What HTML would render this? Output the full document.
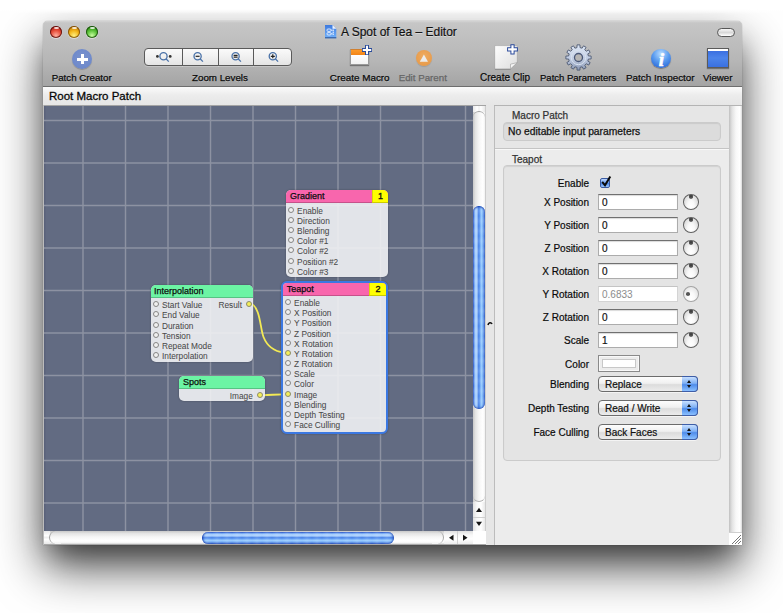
<!DOCTYPE html>
<html><head><meta charset="utf-8">
<style>
*{box-sizing:border-box;margin:0;padding:0}
html,body{width:783px;height:613px;overflow:hidden;background:#fff;font-family:"Liberation Sans",sans-serif}
.a{position:absolute}
#win{position:absolute;left:43px;top:21px;width:699px;height:524px;border-radius:5px 5px 0 0;box-shadow:0 23px 48px rgba(0,0,0,0.66),0 16px 26px -8px rgba(0,0,0,0.4),0 0 1px rgba(0,0,0,0.5);background:#ececec}
#tb{position:absolute;left:43px;top:21px;width:699px;height:66px;border-radius:5px 5px 0 0;background:linear-gradient(#d4d4d4 0px,#c6c6c6 2px,#b6b6b6 40px,#a4a4a4 65px);border-bottom:1px solid #6e6e6e}
.lbl{position:absolute;font-size:10px;line-height:10px;color:#0a0a0a;-webkit-text-stroke:0.25px currentColor;white-space:nowrap;text-shadow:0 1px 0 rgba(255,255,255,0.3)}
.tl{position:absolute;top:25.6px;width:12.2px;height:12.2px;border-radius:50%}
#path{position:absolute;left:43px;top:87px;width:699px;height:18px;background:linear-gradient(#fbfbfb,#ececec 45%,#e6e6e6)}
.seg{position:absolute;top:47.5px;height:18.5px;background:linear-gradient(#fafafa,#f0f0f0 50%,#e4e4e4);border:1px solid #5a5a5a;box-shadow:0 1px 0 rgba(255,255,255,.25)}

.pl{position:absolute;font-size:10px;line-height:12px;color:#0a0a0a;-webkit-text-stroke:0.2px currentColor;white-space:nowrap;text-align:right;width:120px;left:469px}
.fld{position:absolute;left:598px;width:80px;height:16px;background:#fff;border:1px solid #acacac;border-top-color:#707070;box-shadow:inset 0 1px 1px rgba(0,0,0,.15)}
.fld span{position:absolute;left:3px;top:2px;-webkit-text-stroke:0.2px currentColor;font-size:10px;line-height:12px;color:#111}
.knob{position:absolute;left:683px;width:16px;height:15.5px;border-radius:50%;border:1.2px solid #606060;background:radial-gradient(ellipse at 50% 80%,#fff 0,#f8f8f8 35%,#dcdcdc 75%,#c0c0c0 100%)}
.knob:after{content:"";position:absolute;left:4.8px;top:0px;width:4.5px;height:4px;border-radius:0 0 50% 50%;background:radial-gradient(circle at 50% 30%,#333,#666 70%,rgba(100,100,100,.4))}
.pop{position:absolute;left:598px;width:100px;height:16px;border-radius:4px;border:1px solid #6c6c6c;background:linear-gradient(#fdfdfd,#f0f0f0 45%,#dcdcdc 55%,#ececec);box-shadow:0 1px 0 rgba(255,255,255,.6)}
.pop span{position:absolute;left:6px;top:1.5px;-webkit-text-stroke:0.2px currentColor;font-size:10px;line-height:12px;color:#111}
.pop i{position:absolute;right:-1px;top:-1px;width:16px;height:16px;border-radius:0 4px 4px 0;border:1px solid #3e5ea8;border-left:none;background:linear-gradient(#c8e0ff,#7fb0f4 45%,#4f8cea 55%,#8ac0ff)}
.pop i:before{content:"";position:absolute;left:4.5px;top:2.5px;border-left:2.5px solid transparent;border-right:2.5px solid transparent;border-bottom:3.5px solid #111}
.pop i:after{content:"";position:absolute;left:4.5px;top:8px;border-left:2.5px solid transparent;border-right:2.5px solid transparent;border-top:3.5px solid #111}

.pt{position:absolute;border-radius:5px;background:rgba(241,242,244,.9);box-shadow:0 0 2px rgba(0,0,0,.35);overflow:hidden}
.ph{position:absolute;left:0;top:0;right:0;font-size:9px;line-height:12.8px;color:#0e0e0e;-webkit-text-stroke:0.25px currentColor;padding-left:4px;white-space:nowrap;border-bottom:1px solid rgba(0,0,0,.2)}
.pn{position:absolute;top:0;right:0;height:13.3px;-webkit-text-stroke:0.35px currentColor;background:#ffff00;font-size:9px;line-height:12.8px;border-bottom:1px solid rgba(0,0,0,.2);text-align:center;color:#111;border-left:1px solid rgba(0,0,0,.15)}
.pr{position:absolute;font-size:8.3px;line-height:10px;color:#4a4a4a;white-space:nowrap;-webkit-text-stroke:0.05px currentColor}
.po{position:absolute;width:6px;height:6px;border-radius:50%;border:1px solid #858585;background:#f0f0f0}
.py{background:#f4ee5a;border-color:#8c8c6a}
</style></head><body>
<div id="win"></div>
<div class="a" style="left:0;top:0;width:783px;height:14px;background:linear-gradient(#fff 0,#fff 9px,rgba(255,255,255,0) 14px)"></div>
<div id="tb"></div>
<div class="a" style="left:43px;top:87px;width:1px;height:458px;background:#bcbcbc"></div>
<!-- traffic lights -->
<div class="tl" style="left:50px;background:radial-gradient(circle at 50% 80%,#ffb0a0 0,#e8503c 45%,#b01e14 80%,#5a0e0a 100%);box-shadow:inset 0 0 0 1px rgba(70,10,8,.75),0 1px 1px rgba(255,255,255,.5)"></div>
<div class="tl" style="left:68px;background:radial-gradient(circle at 50% 80%,#fff080 0,#f2b418 45%,#c07808 80%,#6a4004 100%);box-shadow:inset 0 0 0 1px rgba(100,60,4,.7),0 1px 1px rgba(255,255,255,.5)"></div>
<div class="tl" style="left:86px;background:radial-gradient(circle at 50% 80%,#c8ffa0 0,#5cc23a 45%,#2a8a10 80%,#134806 100%);box-shadow:inset 0 0 0 1px rgba(16,60,6,.75),0 1px 1px rgba(255,255,255,.5)"></div>
<div class="a" style="left:53.6px;top:26.8px;width:5px;height:2.6px;border-radius:50%;background:rgba(255,255,255,.8)"></div>
<div class="a" style="left:71.6px;top:26.8px;width:5px;height:2.6px;border-radius:50%;background:rgba(255,255,255,.8)"></div>
<div class="a" style="left:89.6px;top:26.8px;width:5px;height:2.6px;border-radius:50%;background:rgba(255,255,255,.8)"></div>
<!-- title -->
<svg class="a" style="left:325px;top:24.8px" width="12" height="14" viewBox="0 0 12 14"><defs><linearGradient id="dg" x1="0" y1="0" x2="0" y2="1"><stop offset="0" stop-color="#3e7ade"/><stop offset="1" stop-color="#72b2fa"/></linearGradient></defs><path d="M0 0h7.5l3.8 3.8V13.2H0z" fill="url(#dg)"/><path d="M0 12.3h11.3v1H0z" fill="#2a4e90"/><path d="M7.5 0l3.8 3.8H7.5z" fill="#eef4ff"/><g fill="none" stroke="#e4eeff" stroke-width="0.9"><rect x="2" y="4" width="4" height="2.4" rx="1"/><rect x="2" y="7.6" width="4" height="2.4" rx="1"/><path d="M6 5.2h1.6M6 8.8h1.6"/></g><g fill="#e4eeff"><rect x="7.6" y="4.6" width="1.4" height="1.2"/><rect x="7.6" y="6.6" width="1.4" height="1.2"/><rect x="7.6" y="8.6" width="1.4" height="1.2"/></g></svg>
<div class="a" style="left:341px;top:25.8px;font-size:12px;line-height:13px;color:#111;-webkit-text-stroke:0.2px #111;white-space:nowrap;text-shadow:0 1px 0 rgba(255,255,255,.4)">A Spot of Tea – Editor</div>
<!-- toolbar pill -->
<div class="a" style="left:717px;top:28px;width:18px;height:9px;border-radius:5px;border:1px solid #575757;background:linear-gradient(#f8f8f8,#d8d8d8 50%,#fff)"></div>

<!-- Patch creator -->
<div class="a" style="left:72px;top:49px;width:20px;height:20px;border-radius:50%;background:radial-gradient(circle at 50% 45%,#7a92cc 0,#6f8acb 65%,#5b7ac6 85%,#6a88d0 100%);box-shadow:0 1px 1px rgba(0,0,0,.2)"></div>
<div class="a" style="left:76.8px;top:58px;width:10.8px;height:2.9px;background:#fff"></div>
<div class="a" style="left:80.8px;top:53.9px;width:2.9px;height:10.6px;background:#fff"></div>
<div class="lbl" style="left:51.7px;top:73.3px;font-size:9.72px">Patch Creator</div>

<!-- Zoom segmented -->
<div class="seg" style="left:144px;width:39px;border-radius:4px 0 0 4px"></div>
<div class="seg" style="left:182px;width:37px"></div>
<div class="seg" style="left:218px;width:36px"></div>
<div class="seg" style="left:253px;width:39px;border-radius:0 4px 4px 0"></div>
<svg class="a" style="left:144px;top:47px" width="148" height="19" viewBox="0 0 148 19">
 <g fill="none" stroke="#4a72a8" stroke-width="1.3">
  <circle cx="19.5" cy="9.3" r="3.6"/><path d="M22 11.8l2.8 2.8"/>
  <circle cx="53.6" cy="9.3" r="3.6"/><path d="M56.1 11.8l2.8 2.8"/>
  <circle cx="91.6" cy="9.3" r="3.6"/><path d="M94.1 11.8l2.8 2.8"/>
  <circle cx="128.8" cy="9.3" r="3.6"/><path d="M131.3 11.8l2.8 2.8"/>
 </g>
 <g fill="#333"><circle cx="13.4" cy="9.4" r="1.4"/><circle cx="26.2" cy="9.4" r="1.4"/></g>
 <g stroke="#222" stroke-width="1.2"><path d="M51.6 9.3h4"/><path d="M89.6 8.4h4M89.6 10.2h4"/><path d="M126.8 9.3h4M128.8 7.3v4"/></g>
</svg>
<div class="lbl" style="left:192px;top:73.3px;font-size:9.77px">Zoom Levels</div>

<!-- Create Macro -->
<div class="a" style="left:349.5px;top:48.5px;width:19.8px;height:16.5px;background:linear-gradient(#fc9a2a 0,#f28418 5.2px,#fff 5.2px,#f2f2f2);border:1px solid #9a9a9a;border-top-color:#d08030;box-shadow:0 1px 1px rgba(0,0,0,.35)"></div>
<svg class="a" style="left:361.3px;top:44.3px" width="12" height="12" viewBox="0 0 12 12"><path d="M6 1v10M1 6h10" stroke="#2c4c9a" stroke-width="4"/><path d="M6 1.8v8.4M1.8 6h8.4" stroke="#fff" stroke-width="2"/></svg>
<div class="lbl" style="left:329.8px;top:73.3px;font-size:9.9px">Create Macro</div>

<!-- Edit parent -->
<div class="a" style="left:415.9px;top:50.2px;width:16px;height:16px;border-radius:50%;background:radial-gradient(circle at 50% 40%,#eeac62,#e89c4c 70%,#dc9040);box-shadow:0 1px 1px rgba(0,0,0,.12)"></div>
<svg class="a" style="left:418px;top:52.5px" width="12" height="10" viewBox="0 0 12 10"><path d="M5.9 1.4L10 8.8H1.8z" fill="#ececec"/></svg>
<div class="lbl" style="left:398.7px;top:73.3px;font-size:9.75px;color:#666;text-shadow:none">Edit Parent</div>

<!-- Create Clip -->
<svg class="a" style="left:492px;top:43px" width="30" height="28" viewBox="0 0 30 28">
 <defs><linearGradient id="pg" x1="0" y1="0" x2="1" y2="1"><stop offset="0" stop-color="#fdfdfd"/><stop offset="1" stop-color="#dedede"/></linearGradient></defs>
 <path d="M2.9 2.7H25.2V19.6L18.5 25.9H2.9z" fill="url(#pg)" stroke="rgba(0,0,0,.18)" stroke-width="0.6"/>
 <path d="M2.9 26.2H18.5" stroke="rgba(0,0,0,.25)" stroke-width="0.8"/>
 <path d="M18.5 21.2L25.2 19.6L18.5 25.9z" fill="#f4f4f4" stroke="#9a9a9a" stroke-width="0.6"/>
 <path d="M20.5 1.2V11.4M15.1 6.3H25.9" stroke="#2a4a9c" stroke-width="4.2"/><path d="M20.5 2.2V10.4M16.1 6.3H24.9" stroke="#fff" stroke-width="2.2"/>
</svg>
<div class="lbl" style="left:480px;top:73.3px">Create Clip</div>

<!-- Gear -->
<svg class="a" style="left:564.7px;top:43.6px" width="27" height="27" viewBox="0 0 27 27">
 <defs><linearGradient id="gg" x1="0" y1="0" x2="0" y2="1"><stop offset="0" stop-color="#dfe8f6"/><stop offset="0.55" stop-color="#c0cce2"/><stop offset="1" stop-color="#8a98b4"/></linearGradient></defs>
 <path fill="url(#gg)" stroke="#4e5a74" stroke-width="0.9" stroke-linejoin="round" d="M11.99 3.62 L12.04 0.88 L14.96 0.88 L15.01 3.62 L17.13 4.18 L18.54 1.84 L21.07 3.30 L19.75 5.70 L21.30 7.25 L23.70 5.93 L25.16 8.46 L22.82 9.87 L23.38 11.99 L26.12 12.04 L26.12 14.96 L23.38 15.01 L22.82 17.13 L25.16 18.54 L23.70 21.07 L21.30 19.75 L19.75 21.30 L21.07 23.70 L18.54 25.16 L17.13 22.82 L15.01 23.38 L14.96 26.12 L12.04 26.12 L11.99 23.38 L9.87 22.82 L8.46 25.16 L5.93 23.70 L7.25 21.30 L5.70 19.75 L3.30 21.07 L1.84 18.54 L4.18 17.13 L3.62 15.01 L0.88 14.96 L0.88 12.04 L3.62 11.99 L4.18 9.87 L1.84 8.46 L3.30 5.93 L5.70 7.25 L7.25 5.70 L5.93 3.30 L8.46 1.84 L9.87 4.18Z"/>
 <circle cx="13.5" cy="13.5" r="7.2" fill="none" stroke="#d8e2f0" stroke-width="1"/>
 <circle cx="13.5" cy="13.5" r="4" fill="#b6b6b6" stroke="#4a5878" stroke-width="1.3"/>
</svg>
<div class="lbl" style="left:540px;top:73.3px;font-size:9.53px">Patch Parameters</div>

<!-- Info -->
<div class="a" style="left:651.2px;top:48.6px;width:19.5px;height:19.5px;border-radius:50%;background:radial-gradient(circle at 50% 25%,#b8dcff 0,#5a9cf0 45%,#2c6ad8 85%,#2458c0 100%);box-shadow:0 1px 1px rgba(0,0,0,.3)"></div>
<div class="a" style="left:651.5px;top:48.6px;width:20px;height:20px;font-family:'Liberation Serif',serif;font-style:italic;font-weight:bold;font-size:19px;line-height:21px;text-align:center;color:#fff;-webkit-text-stroke:0.6px #fff">i</div>
<div class="lbl" style="left:626px;top:73.3px;font-size:9.9px">Patch Inspector</div>

<!-- Viewer -->
<div class="a" style="left:707.3px;top:48px;width:21.8px;height:19.6px;border:1px solid #5a5a5a;background:linear-gradient(#fff 0,#fff 1.5px,#3a6ee0 1.5px,#4c84ea 50%,#3a70e0);box-shadow:0 1px 1px rgba(0,0,0,.35)"></div>
<div class="lbl" style="left:703px;top:73.3px;font-size:9.7px">Viewer</div>

<div id="path"><div class="a" style="left:6px;top:2.3px;font-size:11.5px;line-height:14px;color:#080808;-webkit-text-stroke:0.3px #080808">Root Macro Patch</div></div>

<svg class="a" style="left:44px;top:106px" width="429" height="425"><rect width="429" height="425" fill="#626b82"/><rect x="0" y="0" width="1.5" height="425" fill="#5a627a"/><g stroke="#8d92a2" stroke-width="1.45"><path d="M39.0 0V425"/><path d="M81.5 0V425"/><path d="M124.0 0V425"/><path d="M166.5 0V425"/><path d="M209.0 0V425"/><path d="M251.5 0V425"/><path d="M294.0 0V425"/><path d="M336.5 0V425"/><path d="M379.0 0V425"/><path d="M421.5 0V425"/><path d="M0 14.5H429"/><path d="M0 57.0H429"/><path d="M0 99.5H429"/><path d="M0 142.0H429"/><path d="M0 184.5H429"/><path d="M0 227.0H429"/><path d="M0 269.5H429"/><path d="M0 312.0H429"/><path d="M0 354.5H429"/><path d="M0 397.0H429"/></g></svg>
<svg class="a" style="left:0;top:0" width="783" height="613"><g fill="none" stroke="#f3ea55" stroke-width="1.8"><path d="M251 303.5C260.5 308 260 328 263.5 337C267.5 347 275 351.5 284 352.5"/><path d="M262 395.3C272 395 276 394.3 284 394.3"/></g></svg>
<div class="pt" style="left:286px;top:190px;width:102px;height:87px">
<div class="ph" style="background:#f866ad;height:13.3px">Gradient</div><div class="pn" style="width:16px">1</div>
<div class="po" style="left:2.20px;top:16.50px"></div><div class="pr" style="left:11.10px;top:15.65px">Enable</div>
<div class="po" style="left:2.20px;top:26.70px"></div><div class="pr" style="left:11.10px;top:25.85px">Direction</div>
<div class="po" style="left:2.20px;top:36.90px"></div><div class="pr" style="left:11.10px;top:36.05px">Blending</div>
<div class="po" style="left:2.20px;top:47.10px"></div><div class="pr" style="left:11.10px;top:46.25px">Color #1</div>
<div class="po" style="left:2.20px;top:57.30px"></div><div class="pr" style="left:11.10px;top:56.45px">Color #2</div>
<div class="po" style="left:2.20px;top:67.50px"></div><div class="pr" style="left:11.10px;top:66.65px">Position #2</div>
<div class="po" style="left:2.20px;top:77.70px"></div><div class="pr" style="left:11.10px;top:76.85px">Color #3</div>
</div>
<div class="pt" style="left:281px;top:281px;width:107px;height:152.8px;border:2.5px solid #3b78e2;border-radius:6px">
<div class="ph" style="background:#f866ad;height:13.3px;padding-left:3.7px">Teapot</div><div class="pn" style="width:17px">2</div>
<div class="po" style="left:2.20px;top:15.90px"></div><div class="pr" style="left:11.10px;top:15.05px">Enable</div>
<div class="po" style="left:2.20px;top:26.08px"></div><div class="pr" style="left:11.10px;top:25.23px">X Position</div>
<div class="po" style="left:2.20px;top:36.26px"></div><div class="pr" style="left:11.10px;top:35.41px">Y Position</div>
<div class="po" style="left:2.20px;top:46.44px"></div><div class="pr" style="left:11.10px;top:45.59px">Z Position</div>
<div class="po" style="left:2.20px;top:56.62px"></div><div class="pr" style="left:11.10px;top:55.77px">X Rotation</div>
<div class="po py" style="left:2.20px;top:66.80px"></div><div class="pr" style="left:11.10px;top:65.95px">Y Rotation</div>
<div class="po" style="left:2.20px;top:76.98px"></div><div class="pr" style="left:11.10px;top:76.13px">Z Rotation</div>
<div class="po" style="left:2.20px;top:87.16px"></div><div class="pr" style="left:11.10px;top:86.31px">Scale</div>
<div class="po" style="left:2.20px;top:97.34px"></div><div class="pr" style="left:11.10px;top:96.49px">Color</div>
<div class="po py" style="left:2.20px;top:107.52px"></div><div class="pr" style="left:11.10px;top:106.67px">Image</div>
<div class="po" style="left:2.20px;top:117.70px"></div><div class="pr" style="left:11.10px;top:116.85px">Blending</div>
<div class="po" style="left:2.20px;top:127.88px"></div><div class="pr" style="left:11.10px;top:127.03px">Depth Testing</div>
<div class="po" style="left:2.20px;top:138.06px"></div><div class="pr" style="left:11.10px;top:137.21px">Face Culling</div>
</div>
<div class="pt" style="left:150.5px;top:285px;width:102.8px;height:76.5px">
<div class="ph" style="background:#6cf4a4;height:13.3px;padding-left:3.5px">Interpolation</div>
<div class="po" style="left:2.60px;top:16.10px"></div><div class="pr" style="left:11.50px;top:15.25px">Start Value</div>
<div class="po" style="left:2.60px;top:26.30px"></div><div class="pr" style="left:11.50px;top:25.45px">End Value</div>
<div class="po" style="left:2.60px;top:36.50px"></div><div class="pr" style="left:11.50px;top:35.65px">Duration</div>
<div class="po" style="left:2.60px;top:46.70px"></div><div class="pr" style="left:11.50px;top:45.85px">Tension</div>
<div class="po" style="left:2.60px;top:56.90px"></div><div class="pr" style="left:11.50px;top:56.05px">Repeat Mode</div>
<div class="po" style="left:2.60px;top:67.10px"></div><div class="pr" style="left:11.50px;top:66.25px">Interpolation</div>
<div class="pr" style="right:11.3px;top:15.25px">Result</div><div class="po py" style="left:95.10px;top:16.10px"></div>
</div>
<div class="pt" style="left:179px;top:376px;width:86px;height:25px">
<div class="ph" style="background:#6cf4a4;height:13.3px">Spots</div>
<div class="pr" style="right:12.2px;top:14.85px">Image</div><div class="po py" style="left:77.50px;top:15.70px"></div>
</div>
<!-- vertical scrollbar -->
<div class="a" style="left:473px;top:106px;width:13px;height:425px;background:linear-gradient(90deg,#c8c8c8,#e4e4e4 2.5px,#f6f6f6 6px,#fff 10px,#f4f4f4 11.5px,#cccccc 12.5px)"></div>
<div class="a" style="left:473px;top:105px;width:13px;height:1px;background:#a8a8a8"></div>
<div class="a" style="left:473px;top:106px;width:12px;height:6px;background:linear-gradient(90deg,#e8e8e8,#fff 35%,#f0f0f0 50%,#fff 65%,#e8e8e8)"></div>
<div class="a" style="left:473px;top:111px;width:12px;height:12px;border-radius:6px 6px 0 0;border-top:1px solid #a0a0a0;background:linear-gradient(90deg,#c8c8c8,#e4e4e4 2.5px,#f6f6f6 6px,#fff 10px,#f4f4f4 11.5px)"></div>
<div class="a" style="left:473px;top:205.5px;width:11.8px;height:203px;border-radius:6px;background:linear-gradient(90deg,#2a50c0 0,#6a9ef0 1.2px,#b4d8ff 2.8px,#a0c8fc 4.2px,#4c84e8 5.2px,#5c98f2 6.8px,#9cd0ff 8.2px,#78b0f6 9.8px,#3a66c8 11.8px);box-shadow:inset 0 2px 2px -1px #0c34a8,inset 0 -2px 2px -1px #2048b0"></div>
<div class="a" style="left:473px;top:205.5px;width:11.8px;height:203px;border-radius:6px;background:repeating-linear-gradient(180deg,rgba(255,255,255,0) 0,rgba(255,255,255,.12) 5px,rgba(255,255,255,0) 10px)"></div>
<div class="a" style="left:473px;top:489px;width:12px;height:13px;border-radius:0 0 6px 6px;border-bottom:1px solid #b0b0b0;background:linear-gradient(90deg,#c8c8c8,#e4e4e4 2.5px,#f6f6f6 6px,#fff 10px,#f4f4f4 11.5px)"></div>
<div class="a" style="left:473px;top:502px;width:12px;height:29px;background:linear-gradient(90deg,#e0e0e0,#f8f8f8 4px,#fff 8px,#e8e8e8)"></div>
<div class="a" style="left:473px;top:517px;width:12px;height:1px;background:#d0d0d0"></div>
<svg class="a" style="left:473px;top:502px" width="13" height="29"><path d="M6 5.8L9 10H3z" fill="#151515"/><path d="M3 19.8h6L6 24z" fill="#151515"/></svg>
<!-- corner -->
<div class="a" style="left:473px;top:531px;width:12.5px;height:14px;background:#fff"></div>
<!-- horizontal scrollbar -->
<div class="a" style="left:44px;top:531px;width:429px;height:14px;background:linear-gradient(180deg,#c8c8c8,#e4e4e4 2.5px,#f6f6f6 6px,#fff 10px,#f4f4f4 12px,#bcbcbc 13.5px)"></div>
<div class="a" style="left:44px;top:531px;width:6px;height:13px;background:linear-gradient(180deg,#e8e8e8,#fff 35%,#f0f0f0 50%,#fff 65%,#e8e8e8)"></div>
<div class="a" style="left:49px;top:531px;width:12px;height:13px;border-radius:7px 0 0 7px;border-left:1px solid #a0a0a0;background:linear-gradient(180deg,#c8c8c8,#e4e4e4 2.5px,#f6f6f6 6px,#fff 10px,#f4f4f4 12px)"></div>
<div class="a" style="left:201.5px;top:532px;width:192.5px;height:11.5px;border-radius:6px;background:linear-gradient(180deg,#2a50c0 0,#6a9ef0 1.2px,#b4d8ff 2.8px,#a0c8fc 4.2px,#4c84e8 5.2px,#5c98f2 6.8px,#9cd0ff 8.2px,#78b0f6 9.8px,#3a66c8 11.5px);box-shadow:inset 2px 0 2px -1px #0c34a8,inset -2px 0 2px -1px #2048b0"></div>
<div class="a" style="left:201.5px;top:532px;width:192.5px;height:11.5px;border-radius:6px;background:repeating-linear-gradient(90deg,rgba(255,255,255,0) 0,rgba(255,255,255,.12) 5px,rgba(255,255,255,0) 10px)"></div>
<div class="a" style="left:432px;top:531px;width:12px;height:13px;border-radius:0 7px 7px 0;border-right:1px solid #a8a8a8;background:linear-gradient(180deg,#c8c8c8,#e4e4e4 2.5px,#f6f6f6 6px,#fff 10px,#f4f4f4 12px)"></div>
<div class="a" style="left:444px;top:531px;width:29px;height:13px;background:linear-gradient(180deg,#e0e0e0,#f8f8f8 4px,#fff 8px,#ececec)"></div>
<div class="a" style="left:457px;top:531px;width:1px;height:13px;background:#d0d0d0"></div>
<svg class="a" style="left:444px;top:531px" width="29" height="14"><path d="M5 6.8L9.5 3.8V9.8z" fill="#151515"/><path d="M19 3.8V9.8L23.5 6.8z" fill="#151515"/></svg>
<div class="a" style="left:44px;top:544px;width:442px;height:1px;background:#a8a8a8"></div>
<!-- divider -->
<div class="a" style="left:44px;top:105px;width:442px;height:1px;background:#a4a4a4"></div>
<div class="a" style="left:486px;top:105px;width:8px;height:1px;background:#e6e6e6"></div>
<div class="a" style="left:494px;top:105px;width:248px;height:1px;background:#b4b4b4"></div>
<div class="a" style="left:486px;top:105px;width:8px;height:440px;background:#e6e6e6"></div>
<div class="a" style="left:494px;top:106px;width:1px;height:439px;background:#bcbcbc"></div>
<svg class="a" style="left:487px;top:321px" width="6" height="6"><path d="M1 4C1.5 1.5 4 1 5 3" stroke="#111" stroke-width="1.6" fill="none"/></svg>
<!-- right panel -->
<div class="a" style="left:495px;top:106px;width:234px;height:439px;background:#ececec"></div>
<div class="a" style="left:495px;top:106px;width:234px;height:43px;background:#e6e6e6;border-bottom:1px solid #c4c4c4"></div>
<div class="a" style="left:495px;top:149px;width:234px;height:1px;background:#f8f8f8"></div>
<div class="a" style="left:729px;top:106px;width:13px;height:426px;background:linear-gradient(90deg,#c0c0c0,#e2e2e2 3px,#f8f8f8 7px,#fff 11px,#d8d8d8 13px)"></div>
<div class="a" style="left:729px;top:532px;width:13px;height:13px;background:#fff;border-top:1px solid #d0d0d0"></div>
<svg class="a" style="left:729px;top:532px" width="13" height="13"><path d="M3 12L12 3M6 12L12 6M9 12L12 9" stroke="#777" stroke-width="1"/></svg>
<div class="lbl" style="left:512px;top:111px;color:#333;text-shadow:none">Macro Patch</div>
<div class="a" style="left:503px;top:122px;width:218px;height:19px;border-radius:4px;background:#dcdcdc;border:1px solid #cbcbcb;box-shadow:inset 0 1px 1px rgba(0,0,0,.08)"></div>
<div class="lbl" style="left:508px;top:127px;font-size:10.3px;color:#111;text-shadow:none">No editable input parameters</div>
<div class="lbl" style="left:512px;top:155px;color:#333;text-shadow:none">Teapot</div>
<div class="a" style="left:503px;top:165px;width:218px;height:296px;border-radius:4px;background:#e4e4e4;border:1px solid #cbcbcb;box-shadow:inset 0 1px 1px rgba(0,0,0,.08)"></div>

<div class="pl" style="top:178px">Enable</div>
<div class="a" style="left:600px;top:178px;width:10px;height:10px;border-radius:2px;border:1px solid #3a5aa0;background:linear-gradient(#bcd6ff,#6a9ef0 50%,#4a86e8 55%,#9cc8ff)"></div>
<svg class="a" style="left:599px;top:174px" width="14" height="14"><path d="M3.2 7.8L6 11.3L11.3 2.5" stroke="#0a0a0a" stroke-width="2" fill="none" stroke-linejoin="miter"/></svg>
<div class="pl" style="top:197px">X Position</div>
<div class="fld" style="top:194px"><span>0</span></div>
<div class="knob" style="top:194px"></div>
<div class="pl" style="top:220px">Y Position</div>
<div class="fld" style="top:217px"><span>0</span></div>
<div class="knob" style="top:217px"></div>
<div class="pl" style="top:243px">Z Position</div>
<div class="fld" style="top:240px"><span>0</span></div>
<div class="knob" style="top:240px"></div>
<div class="pl" style="top:266px">X Rotation</div>
<div class="fld" style="top:263px"><span>0</span></div>
<div class="knob" style="top:263px"></div>
<div class="pl" style="top:289px">Y Rotation</div>
<div class="fld" style="top:286px;border-color:#d4d4d4;border-top-color:#c4c4c4;box-shadow:none;background:#fff"><span style="color:#8c8c8c;-webkit-text-stroke:0">0.6833</span></div>
<div class="knob" style="top:286px;border-color:#a4a4a4;background:radial-gradient(ellipse at 50% 80%,#fff 0,#fafafa 35%,#e6e6e6 75%,#d0d0d0 100%)"><b style="position:absolute;left:1.5px;top:5px;width:4px;height:3.5px;border-radius:50%;background:#3a3a3a;opacity:.85"></b></div>
<style>.knob[style*="top:286px"]:after{display:none}</style>
<div class="pl" style="top:312px">Z Rotation</div>
<div class="fld" style="top:309px"><span>0</span></div>
<div class="knob" style="top:309px"></div>
<div class="pl" style="top:335px">Scale</div>
<div class="fld" style="top:332px"><span>1</span></div>
<div class="knob" style="top:332px"></div>
<div class="pl" style="top:359px">Color</div>
<div class="a" style="left:598px;top:355px;width:42px;height:17px;border:1px solid #8a8a8a;background:#ececec;box-shadow:inset 0 0 0 1px #f8f8f8"></div>
<div class="a" style="left:602px;top:359px;width:34px;height:9px;border:1px solid #c8c8c8;background:#fff"></div>
<div class="pl" style="top:379px">Blending</div>
<div class="pop" style="top:376px"><span>Replace</span><i></i></div>
<div class="pl" style="top:403px">Depth Testing</div>
<div class="pop" style="top:400px"><span>Read / Write</span><i></i></div>
<div class="pl" style="top:427px">Face Culling</div>
<div class="pop" style="top:424px"><span>Back Faces</span><i></i></div>
</body></html>
